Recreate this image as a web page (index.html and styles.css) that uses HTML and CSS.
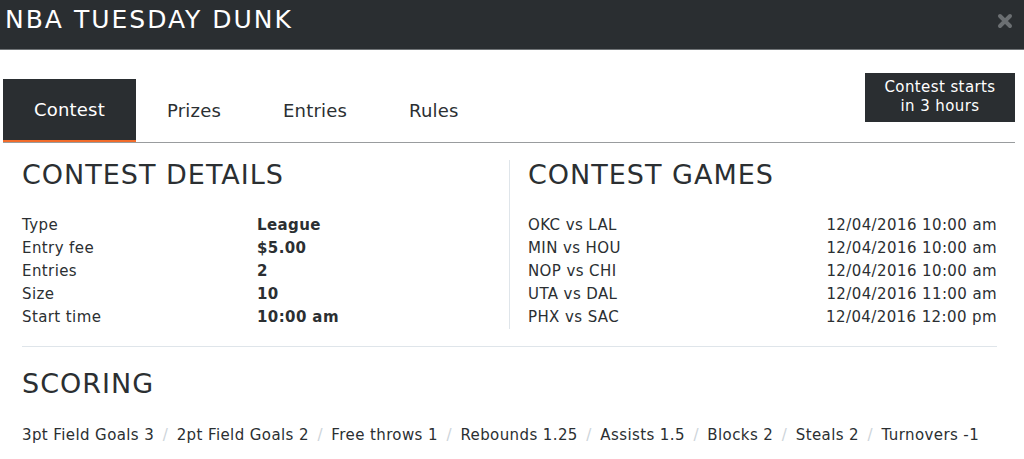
FILE: index.html
```html
<!DOCTYPE html>
<html>
<head>
<meta charset="utf-8">
<link rel="stylesheet" href="styles.css">
</head>
<body>
<header class="topbar">
  <h1 class="title">NBA TUESDAY DUNK</h1>
  <svg class="close" width="16" height="16" viewBox="0 0 16 16"><path d="M3 3 L13 13 M13 3 L3 13" stroke="#6b6f72" stroke-width="4" stroke-linecap="round"/></svg>
</header>
<main class="panel">
  <div class="tabrow">
    <nav class="tabs">
      <a class="tab active">Contest</a>
      <a class="tab">Prizes</a>
      <a class="tab">Entries</a>
      <a class="tab">Rules</a>
    </nav>
    <div class="starts">Contest starts<br>in 3 hours</div>
  </div>
  <section class="content">
    <div class="cols">
      <div class="col">
        <h2 class="heading">CONTEST DETAILS</h2>
        <dl class="details">
          <div class="row"><dt>Type</dt><dd>League</dd></div>
          <div class="row"><dt>Entry fee</dt><dd>$5.00</dd></div>
          <div class="row"><dt>Entries</dt><dd>2</dd></div>
          <div class="row"><dt>Size</dt><dd>10</dd></div>
          <div class="row"><dt>Start time</dt><dd>10:00 am</dd></div>
        </dl>
      </div>
      <div class="col col-right">
        <h2 class="heading">CONTEST GAMES</h2>
        <ul class="games">
          <li><span>OKC vs LAL</span><span>12/04/2016 10:00 am</span></li>
          <li><span>MIN vs HOU</span><span>12/04/2016 10:00 am</span></li>
          <li><span>NOP vs CHI</span><span>12/04/2016 10:00 am</span></li>
          <li><span>UTA vs DAL</span><span>12/04/2016 11:00 am</span></li>
          <li><span>PHX vs SAC</span><span>12/04/2016 12:00 pm</span></li>
        </ul>
      </div>
    </div>
    <div class="scoring">
      <h2 class="heading">SCORING</h2>
      <p class="rules">
        <span>3pt Field Goals 3</span><span class="sep">/</span><span>2pt Field Goals 2</span><span class="sep">/</span><span>Free throws 1</span><span class="sep">/</span><span>Rebounds 1.25</span><span class="sep">/</span><span>Assists 1.5</span><span class="sep">/</span><span>Blocks 2</span><span class="sep">/</span><span>Steals 2</span><span class="sep">/</span><span>Turnovers -1</span>
      </p>
    </div>
  </section>
</main>
</body>
</html>
```
FILE: styles.css
```css
* { box-sizing: border-box; }
html, body { margin: 0; padding: 0; background: #fff; }
body {
  font-family: "DejaVu Sans", "Open Sans", sans-serif;
  color: #2b2f32;
  width: 1024px;
  height: 459px;
  overflow: hidden;
  letter-spacing: 0.4px;
}
.topbar {
  height: 50px;
  background: #2a2e31;
  border-bottom: 1px solid #707477;
  display: flex;
  align-items: center;
  justify-content: space-between;
  padding: 0 11px 10px 5px;
}
.title {
  margin: 0;
  color: #fff;
  font-size: 25px;
  line-height: 30px;
  font-weight: normal;
  letter-spacing: 2px;
}
.close {
  display: block;
  margin-top: 2px;
}
.panel {
  margin: 23px 9px 0 3px;
}
.tabrow {
  display: flex;
  justify-content: space-between;
  align-items: flex-start;
  border-bottom: 1px solid #999c9e;
}
.tabs {
  display: flex;
  margin-top: 6px;
}
.tab {
  height: 63px;
  padding: 0 31px;
  display: flex;
  align-items: center;
  font-size: 18px;
  letter-spacing: 0.2px;
  color: #2b2f32;
}
.tab.active {
  background: #2a2e31;
  color: #fff;
  border-bottom: 2px solid #f26c2b;
}
.starts {
  width: 150px;
  height: 49px;
  background: #2a2e31;
  color: #fff;
  font-size: 15px;
  line-height: 19px;
  text-align: center;
  padding-top: 5px;
}
.content {
  padding: 0 18px 0 19px;
}
.cols {
  display: grid;
  grid-template-columns: 487px 1fr;
  padding-top: 17px;
  padding-bottom: 17px;
  border-bottom: 1px solid #dfe5ea;
}
.col-right {
  border-left: 1px solid #dfe5ea;
  padding-left: 18px;
}
.heading {
  margin: 0;
  font-size: 27px;
  font-weight: normal;
  line-height: 30px;
  letter-spacing: 1px;
}
.details, .games {
  margin: 24px 0 0;
  padding: 0;
  list-style: none;
  font-size: 15px;
  line-height: 23px;
}
.row { display: flex; }
.row dt { width: 235px; }
.row dd { margin: 0; font-weight: bold; }
.games li {
  display: flex;
  justify-content: space-between;
}
.scoring { padding-top: 22px; }
.rules {
  margin: 25px 0 0;
  font-size: 15px;
  line-height: 23px;
  white-space: nowrap;
}
.sep {
  color: #cdd4da;
  margin: 0 8.5px;
}
```
